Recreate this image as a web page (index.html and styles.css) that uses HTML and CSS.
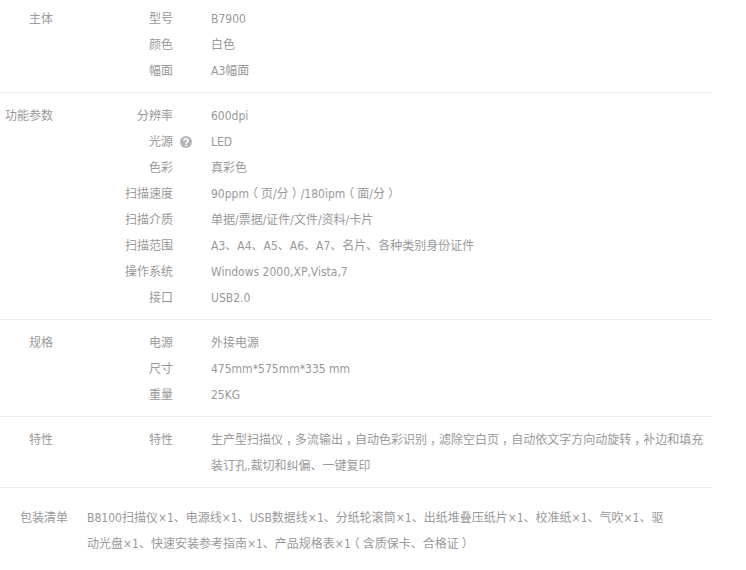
FILE: index.html
```html
<!DOCTYPE html>
<html lang="zh-CN">
<head>
<meta charset="utf-8">
<title>规格参数</title>
<link rel="stylesheet" href="styles.css">
</head>
<body>
<div class="specs">
  <section class="group first">
    <h3 class="group-name">主体</h3>
    <dl class="rows">
      <div class="row"><dt>型号</dt><dd>B7900</dd></div>
      <div class="row"><dt>颜色</dt><dd>白色</dd></div>
      <div class="row"><dt>幅面</dt><dd>A3幅面</dd></div>
    </dl>
  </section>
  <section class="group">
    <h3 class="group-name">功能参数</h3>
    <dl class="rows">
      <div class="row"><dt>分辨率</dt><dd>600dpi</dd></div>
      <div class="row"><dt>光源<svg class="help" viewBox="0 0 12 12" width="12" height="12" aria-hidden="true"><circle cx="6" cy="6" r="6" fill="#b4b4bc"/><path d="M3.9 4.7a2.1 1.9 0 1 1 3.3 1.5c-.8.5-1.2.8-1.2 1.5" fill="none" stroke="#fff" stroke-width="1.5"/><rect x="5.2" y="8.6" width="1.6" height="1.5" fill="#fff"/></svg></dt><dd>LED</dd></div>
      <div class="row"><dt>色彩</dt><dd>真彩色</dd></div>
      <div class="row"><dt>扫描速度</dt><dd>90ppm<span class="punct">（</span>页/分<span class="punct">）</span>/180ipm<span class="punct">（</span>面/分<span class="punct">）</span></dd></div>
      <div class="row"><dt>扫描介质</dt><dd>单据/票据/证件/文件/资料/卡片</dd></div>
      <div class="row"><dt>扫描范围</dt><dd>A3、A4、A5、A6、A7、名片、各种类别身份证件</dd></div>
      <div class="row"><dt>操作系统</dt><dd>Windows 2000,XP,Vista,7</dd></div>
      <div class="row"><dt>接口</dt><dd>USB2.0</dd></div>
    </dl>
  </section>
  <section class="group">
    <h3 class="group-name">规格</h3>
    <dl class="rows">
      <div class="row"><dt>电源</dt><dd>外接电源</dd></div>
      <div class="row"><dt>尺寸</dt><dd>475mm*575mm*335 mm</dd></div>
      <div class="row"><dt>重量</dt><dd>25KG</dd></div>
    </dl>
  </section>
  <section class="group">
    <h3 class="group-name">特性</h3>
    <dl class="rows">
      <div class="row"><dt>特性</dt><dd>生产型扫描仪<span class="punct">，</span>多流输出<span class="punct">，</span>自动色彩识别<span class="punct">，</span>滤除空白页<span class="punct">，</span>自动依文字方向动旋转<span class="punct">，</span>补边和填充装订孔,裁切和纠偏、一键复印</dd></div>
    </dl>
  </section>
  <section class="package">
    <h3 class="package-name">包装清单</h3>
    <p class="package-list">B8100扫描仪×1、电源线×1、USB数据线×1、分纸轮滚筒×1、出纸堆叠压纸片×1、校准纸×1、气吹×1、驱动光盘×1、快速安装参考指南×1、产品规格表×1<span class="punct">（</span>含质保卡、合格证<span class="punct">）</span></p>
  </section>
</div>
</body>
</html>
```
FILE: styles.css
```css
* { box-sizing: border-box; }
html, body { margin: 0; padding: 0; background: #fff; }
body {
  font: 12px/26px "DejaVu Sans", "Noto Sans CJK SC", sans-serif;
  font-stretch: condensed;
  color: #999;
}
.specs { width: 713px; }
h3, dl, dd, dt, p { margin: 0; padding: 0; font-weight: normal; font-size: inherit; }
.group {
  display: flex;
  padding: 10px 0 8px;
  border-bottom: 1px solid #eee;
}
.group.first { padding-top: 6px; }
.group-name { width: 53px; text-align: right; flex: none; }
.rows { flex: 1; }
.row { display: flex; }
.row dt { width: 120px; flex: none; text-align: right; position: relative; }
.row dd { flex: 1; margin-left: 38px; padding-right: 9px; }
.help { position: absolute; left: 127px; top: 7px; }
.package { display: flex; padding-top: 17px; }
.package-name { width: 68px; text-align: right; flex: none; }
.package-list { margin-left: 19px; width: 584px; }
.punct { font-feature-settings: "halt"; padding: 0 3px; }
```
